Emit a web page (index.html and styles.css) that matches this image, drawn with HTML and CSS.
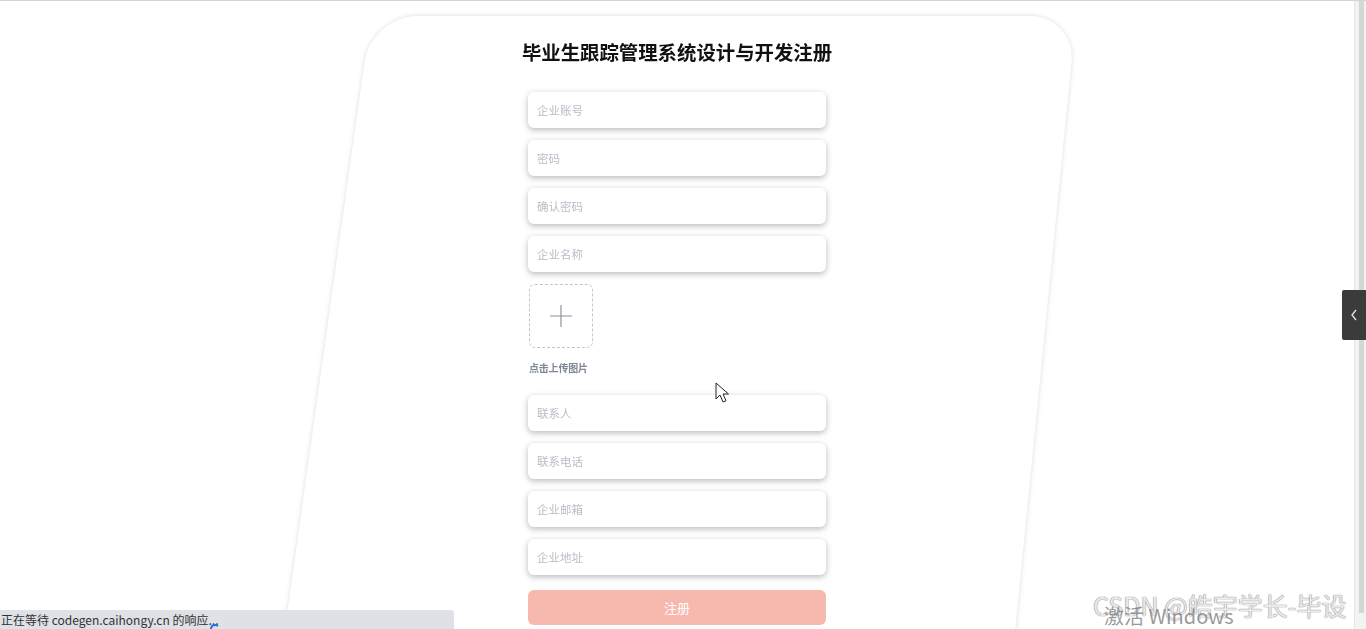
FILE: index.html
```html
<!DOCTYPE html>
<html lang="zh-CN">
<head>
<meta charset="utf-8">
<title>毕业生跟踪管理系统设计与开发注册</title>
<link rel="stylesheet" href="styles.css">
</head>
<body>
<div class="viewport">
  <div class="page">
    <div class="card-bg"></div>
    <form class="reg">
      <h1 class="title">毕业生跟踪管理系统设计与开发注册</h1>
      <input class="field" type="text" placeholder="企业账号">
      <input class="field" type="password" placeholder="密码">
      <input class="field" type="password" placeholder="确认密码">
      <input class="field" type="text" placeholder="企业名称">
      <div class="upload">
        <div class="upload-box">
          <svg class="plus" width="24" height="24" viewBox="0 0 24 24"><path d="M12 1v22M1 12h22" stroke="#8c939d" stroke-width="1.2" fill="none"/></svg>
        </div>
        <div class="upload-tip">点击上传图片</div>
      </div>
      <input class="field" type="text" placeholder="联系人">
      <input class="field" type="text" placeholder="联系电话">
      <input class="field" type="text" placeholder="企业邮箱">
      <input class="field" type="text" placeholder="企业地址">
      <button class="submit" type="button">注册</button>
    </form>
  </div>
  <div class="scrollbar"><div class="thumb"></div></div>
</div>

<div class="side-tab">
  <svg width="8" height="12" viewBox="0 0 8 12"><path d="M6 1L2 6l4 5" stroke="#e6e6e6" stroke-width="1.3" fill="none"/></svg>
</div>

<div class="status">正在等待 codegen.caihongy.cn 的响应...<span class="spinner"></span></div>

<div class="watermark">
  <span class="wm-csdn">CSDN @皓宇学长-毕设</span>
  <span class="wm-win">激活 Windows</span>
</div>

<svg class="cursor" width="14" height="21" viewBox="0 0 14 21">
  <path d="M1 1v16l4-4 3 7 3-1.3-3-6.7h5.5z" fill="#fff" stroke="#222" stroke-width="1" stroke-linejoin="round"/>
</svg>
</body>
</html>
```

FILE: styles.css
```css
* { box-sizing: border-box; }
html, body {
  margin: 0;
  padding: 0;
  width: 1366px;
  height: 629px;
  overflow: hidden;
  background: #fff;
  font-family: "Noto Sans CJK SC", "Noto Sans", sans-serif;
}
.viewport {
  display: flex;
  width: 1366px;
  height: 629px;
  border-top: 1px solid #d4d4d4;
}
.page {
  flex: 1;
  position: relative;
  overflow: hidden;
  display: flex;
  justify-content: center;
}
.card-bg {
  position: absolute;
  left: 371px;
  top: 15px;
  width: 705px;
  height: 760px;
  background: #fff;
  border-radius: 46px;
  box-shadow: 0 0 5px rgba(0, 0, 0, 0.14);
  transform-origin: 50% 0;
  transform: perspective(1500px) rotateX(5deg) skewX(-6.8deg);
}
.reg {
  position: relative;
  width: 310px;
  display: flex;
  flex-direction: column;
  align-items: center;
  padding-top: 39px;
}
.title {
  margin: 0 0 28px;
  font-size: 19.4px;
  line-height: 24px;
  font-weight: 700;
  color: #111;
  white-space: nowrap;
}
.field {
  display: block;
  width: 298px;
  height: 36px;
  margin: 0 0 12px;
  padding: 0 9px;
  border: none;
  outline: none;
  border-radius: 6px;
  background: #fff;
  box-shadow: 0 2px 6px rgba(0, 0, 0, 0.28);
  font-family: inherit;
  font-size: 11.5px;
  color: #333;
}
.field::placeholder { color: #b9bdc6; }
.upload {
  width: 298px;
  display: flex;
  flex-direction: column;
  align-items: flex-start;
  padding-left: 1px;
  margin-bottom: 20px;
}
.upload-box {
  width: 64px;
  height: 64px;
  border: 1px dashed #c0c6d0;
  border-radius: 6px;
  display: flex;
  align-items: center;
  justify-content: center;
}
.upload-tip {
  margin-top: 13px;
  font-size: 10px;
  line-height: 14px;
  font-weight: 700;
  color: #7f8896;
  letter-spacing: -0.2px;
}
.submit {
  width: 298px;
  height: 35px;
  margin-top: 3px;
  border: none;
  border-radius: 6px;
  background: #f7b9ad;
  color: #fff;
  font-family: inherit;
  font-size: 13px;
}
.scrollbar {
  width: 12px;
  background: #f3f3f3;
  border-left: 1px solid #e6e6e6;
  padding: 0 2px 0 4px;
}
.thumb {
  height: 612px;
  background: #d6d6d6;
}
.side-tab {
  position: absolute;
  left: 1342px;
  top: 290px;
  width: 24px;
  height: 50px;
  background: #3b3b3b;
  border-radius: 2px 0 0 2px;
  display: flex;
  align-items: center;
  justify-content: center;
}
.status {
  position: absolute;
  left: 0;
  bottom: 0;
  width: 454px;
  height: 19px;
  padding-left: 1px;
  background: #dee1e6;
  border-top-right-radius: 3px;
  font-size: 12px;
  line-height: 20px;
  color: #333;
  white-space: nowrap;
}
.spinner {
  position: absolute;
  left: 210px;
  top: 14px;
  width: 10px;
  height: 10px;
  border-radius: 50%;
  border: 2px solid transparent;
  border-top-color: #1a73e8;
  border-left-color: #1a73e8;
}
.watermark {
  position: absolute;
  left: 1093px;
  top: 588px;
  width: 273px;
  height: 41px;
}
.wm-win {
  position: absolute;
  left: 11px;
  top: 15px;
  font-family: "Noto Sans CJK SC", sans-serif;
  font-size: 20px;
  line-height: 26px;
  color: rgba(120, 120, 120, 0.75);
  white-space: nowrap;
}
.wm-csdn {
  position: absolute;
  left: 0;
  top: 0;
  font-family: "Noto Sans CJK SC", sans-serif;
  font-size: 25px;
  line-height: 34px;
  color: rgba(255, 255, 255, 0.85);
  text-shadow: 0 0 1px #777, 0 0 1px #888;
  white-space: nowrap;
}
.cursor {
  position: absolute;
  left: 715px;
  top: 382px;
}
```
